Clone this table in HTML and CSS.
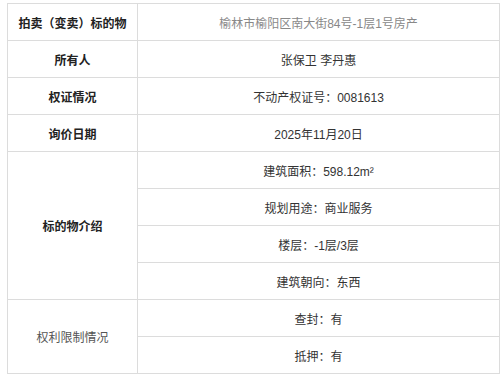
FILE: index.html
```html
<!DOCTYPE html>
<html lang="zh-CN">
<head>
<meta charset="utf-8">
<link rel="stylesheet" href="styles.css">
</head>
<body>
<div class="wrap">
<table class="info">
  <tr>
    <th>拍卖（变卖）标的物</th>
    <td class="muted">榆林市榆阳区南大街84号-1层1号房产</td>
  </tr>
  <tr>
    <th>所有人</th>
    <td>张保卫 李丹惠</td>
  </tr>
  <tr>
    <th>权证情况</th>
    <td>不动产权证号：0081613</td>
  </tr>
  <tr>
    <th>询价日期</th>
    <td>2025年11月20日</td>
  </tr>
  <tr>
    <th rowspan="4">标的物介绍</th>
    <td>建筑面积：598.12m²</td>
  </tr>
  <tr><td>规划用途：商业服务</td></tr>
  <tr><td>楼层：-1层/3层</td></tr>
  <tr><td>建筑朝向：东西</td></tr>
  <tr>
    <th rowspan="2" class="light">权利限制情况</th>
    <td>查封：有</td>
  </tr>
  <tr><td>抵押：有</td></tr>
</table>
</div>
</body>
</html>
```
FILE: styles.css
```css
html, body {
  margin: 0;
  padding: 0;
  background: #fff;
}
.wrap {
  padding: 3px 0 0 7px;
}
.info {
  border-collapse: collapse;
  width: 493px;
  table-layout: fixed;
  font-family: "Liberation Sans", "Noto Sans CJK SC", sans-serif;
  font-size: 12px;
  color: #333;
}
.info th, .info td {
  border: 1px solid #dcdcdc;
  height: 37px;
  padding: 0;
  text-align: center;
  vertical-align: middle;
  box-sizing: border-box;
}
.info th {
  width: 130px;
  font-weight: bold;
  color: #222;
}
.info th.light {
  font-weight: normal;
  color: #555;
}
.info td.muted {
  color: #888;
}
```
